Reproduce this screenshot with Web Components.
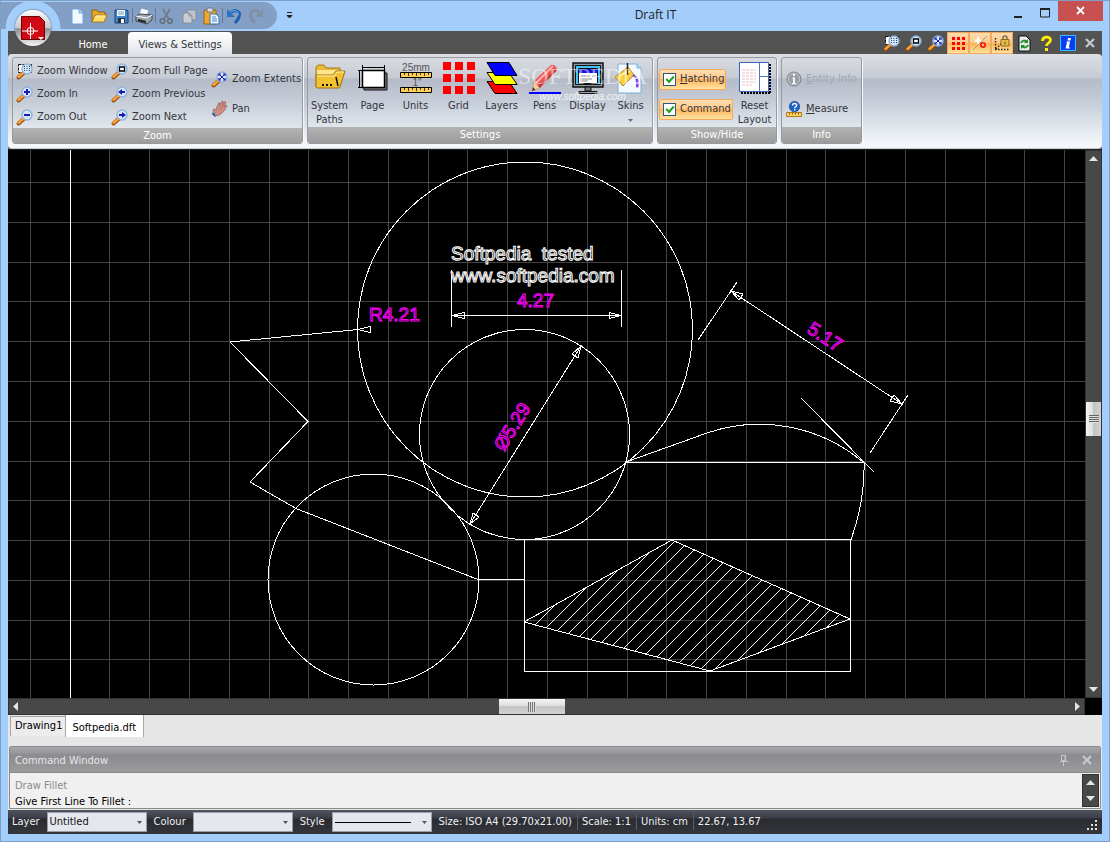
<!DOCTYPE html>
<html lang="en">
<head>
<meta charset="utf-8">
<title>Draft IT</title>
<style>
    html, body {
        margin: 0;
        height: 100%;
    }

    body {
        font: 11px/14px "DejaVu Sans Condensed", "Open Sans", sans-serif;
        color: #33353d;
    }
</style>
</head>
<body>
<draft-app></draft-app>

<script>
// registers a custom element whose shadow root is cloned from the given markup
function define(name, html, setup) {
   const template = document.createElement("template");
   template.innerHTML = html;

   customElements.define(name, class extends HTMLElement {
      constructor() {
         super();
         this.attachShadow({ mode: "open" });
         this.shadowRoot.appendChild(template.content.cloneNode(true));
      }

      connectedCallback() {
         if (setup) setup(this, this.shadowRoot);
      }
   });
}

const lens = (inner) => `
    <path d="M1.500 14.500 7 9.500" stroke="#8a4a10" stroke-width="4" stroke-linecap="round"/>
    <path d="M1.500 14 6.500 9.500" stroke="#ffa030" stroke-width="2.400" stroke-linecap="round"/>
    <circle cx="10" cy="6" r="5" fill="#d4e8fb" stroke="#8fb2dc" stroke-width="1.400"/>${inner}`;

const sheet = "M3 1h7l4 4v11H3z";

const icons = {
   zoomwindow: [16, `<path d="M1.500 1.500h13v8h-13z" fill="#fff" stroke="#111" stroke-dasharray="3 1"/>` + lens(`<path d="M7 3.500h6M7 5.500h6M7 7.500h6" stroke="#345" stroke-dasharray="1 1.500"/>`)],
   zoomin: [16, lens(`<path d="M7 6h6M10 3v6" stroke="#1a1ab0" stroke-width="2"/>`)],
   zoomout: [16, lens(`<path d="M7 6h6" stroke="#1a1ab0" stroke-width="2"/>`)],
   zoompage: [16, lens(`<path d="M7.500 4h5v4h-5z" fill="#fff" stroke="#000" stroke-width="1.300"/>`)],
   zoomprev: [16, lens(`<path d="M13 6H8" stroke="#1a1ab0" stroke-width="2"/><path d="M6 6l4-3v6z" fill="#1a1ab0"/>`)],
   zoomnext: [16, lens(`<path d="M7 6h5" stroke="#1a1ab0" stroke-width="2"/><path d="M14 6l-4-3v6z" fill="#1a1ab0"/>`)],
   zoomext: [16, lens(`<path d="M7.500 3.500l5 5M12.500 3.500l-5 5" stroke="#1a1ab0"/><path d="M7 5V3h2M11 3h2v2M13 7v2h-2M9 9H7V7" stroke="#1a1ab0" stroke-width="1.200" fill="none"/>`)],
   pan: [16, `<path d="M1 11l3 4-1 1-3-3z" fill="#274b8c"/><path d="M1 10l4 5 4-2 3-3 3-5-1-1-2 2 2-5-1.200-.500-2.500 4 1-4L10 0 7.500 4.500 8 2 6.800 2 4.500 6.500l-.500 3-1-1.500-1.500 0z" fill="#cf8f86" stroke="#9a5d58" stroke-width=".7"/><path d="M7 8l3-4M8 9l4-4" stroke="#b06f68" stroke-width=".7"/>`],
   newdoc: [18, `<path d="M4 2h7l4 4v11H4z" fill="#f2f9ff" stroke="#6ea3d8"/><path d="M11 2v4h4" fill="#bcdcf5" stroke="#6ea3d8"/>`],
   open: [18, `<path d="M2 15V3h5l1 2h7v3" fill="#e9a92b" stroke="#8d6514"/><path d="M2 15l3-7h12l-3 7z" fill="#ffdf6d" stroke="#a87818"/><path d="M6 9h9" stroke="#fff6c0"/>`],
   save: [18, `<path d="M3 3h12l1 1v12H3z" fill="#3d84c8" stroke="#1d3e6e"/><path d="M5 3h8v6H5z" fill="#eef5fb"/><path d="M6 5h6M6 7h6" stroke="#7aa"/><path d="M6 11h7v5H6z" fill="#222e3c"/><path d="M9 12h3v4H9z" fill="#fff"/>`],
   print: [18, `<path d="M6 1l8 2-2 6-8-1z" fill="#f6faff" stroke="#7b92ac" stroke-width=".8"/><path d="M1 9l4-2 12 1v5l-5 4-11-3z" fill="#9aa4b0" stroke="#3f4650"/><path d="M1 9l11 2 5-3" stroke="#fff" fill="none"/><path d="M3 13l8 2" stroke="#222" stroke-width="2"/><path d="M12 14l2-1" stroke="#50e050"/>`],
   cut: [18, `<path d="M5 2l6 10M12 2L6 12" stroke="#717a87" stroke-width="1.600"/><circle cx="4.500" cy="14" r="2.300" fill="none" stroke="#68717e" stroke-width="1.600"/><circle cx="12" cy="14" r="2.300" fill="none" stroke="#68717e" stroke-width="1.600"/>`],
   copy: [18, `<path d="M7 3h9v10H7z" fill="#bcc3cc" stroke="#848d99"/><path d="M3 6h6l3 3v7H3z" fill="#c8cdd4" stroke="#848d99"/><path d="M9 6v3h3" fill="none" stroke="#848d99"/>`],
   paste: [18, `<path d="M2 3h12v14H2z" fill="#f0a72b" stroke="#9a6717"/><path d="M5 1h6v4H5z" fill="#d9dee4" stroke="#6f7780"/><path d="M8 7h6l3 3v7H8z" fill="#eaf5ff" stroke="#3f70ad"/><path d="M10 10h4M10 12h5M10 14h5" stroke="#4f89c6"/>`],
   undo: [18, `<path d="M5 6c6-5 11-1 9 4-1 3-2 4-4 6" fill="none" stroke="#1c5fae" stroke-width="3"/><path d="M5 5.500c6-4 9-1 8 3" fill="none" stroke="#79b6f2"/><path d="M2 2v8h8z" fill="#2c72c0"/>`],
   redo: [18, `<path d="M13 6C7 1 2 5 4 10c1 3 2 4 4 6" fill="none" stroke="#8290a4" stroke-width="3"/><path d="M16 2v8H8z" fill="#8290a4"/>`],
   grid9: [16, `<path d="M2 3.500h13M2 8.500h13M2 13.500h13" stroke="#f00" stroke-width="3" stroke-dasharray="3 2"/>`],
   snap: [16, `<path d="M1 15L15 1" stroke="#9a8a70" stroke-width=".8"/><circle cx="11" cy="10" r="2.200" fill="none" stroke="#f01010" stroke-width="1.600"/><path d="M6 2v7M2.500 5.500h7" stroke="#fff" stroke-width="2"/>`],
   lock: [16, `<path d="M1.500 3v12M1 14.500h14M2 14L8 8" stroke="#222" stroke-width="1.400" stroke-dasharray="1.500 1.500"/><path d="M9 5V3q0-2 2-2t2 2v2" fill="none" stroke="#7a7052" stroke-width="1.500"/><path d="M7 4.500h8V11H7z" fill="#e7bf48" stroke="#8b6a20"/><path d="M10.500 6.500h1v3h-1z" fill="#604010"/>`],
   refresh: [16, `<path d="${sheet}" fill="#e8edf0" stroke="#111"/><path d="M5 8c1-3 4-3 6-1" fill="none" stroke="#209020" stroke-width="2"/><path d="M12 4v4H8z" fill="#209020"/><path d="M12 10c-1 3-4 3-6 1" fill="none" stroke="#209020" stroke-width="2"/><path d="M5 14v-4h4z" fill="#209020"/>`],
   help: [16, `<path d="M4.500 6c0-5 8-5 8-1 0 3-4 3-4 6" fill="none" stroke="#8a7a00" stroke-width="3.400"/><path d="M4.500 6c0-5 8-5 8-1 0 3-4 3-4 6" fill="none" stroke="#ffee10" stroke-width="2.600"/><path d="M7 13h3v3H7z" fill="#ffee10"/>`],
   about: [16, `<path d="M.500 .500h15v15H.500z" fill="#0a3cf0" stroke="#30c0ff"/><path d="M8 3h3l-.500 2.500h-3zM7 6.500h3L8.800 12.500H10v1H5.500L7 7.500H6z" fill="#fff"/>`],
   cross: [16, `<path d="M4 4l8 8M12 4l-8 8" stroke="#c3c9d3" stroke-width="2.200"/>`],
   paths: [32, `<path d="M2 25V5l2-2h6l2 3h14v6" fill="#e8b93a" stroke="#a87915"/><path d="M3 8h22v8H3z" fill="#ffe58c"/><path d="M2 25V13h17l3-4h9l-5 16q0 1-2 1H3z" fill="#f2c230" stroke="#a07010"/><path d="M3 14h17l3-4h7" fill="none" stroke="#fff3b0"/><path d="M8 22h2v2H8zM12 22h2v2h-2zM16 22h2v2h-2z" fill="#111"/><path d="M22 15l2 9" stroke="#111" stroke-width="1.500"/>`],
   page: [32, `<path d="M7 11h23v17H7z" fill="#777" stroke="#111"/><path d="M5.500 8.500h22v17h-22z" fill="#fff" stroke="#000" stroke-width="1.500"/><path d="M5 5.500h23M5.500 3v5M27.500 3v5M2.500 8v18M1 8.500h4M1 25.500h4" stroke="#000"/>`],
   units: [32, `<path d="M.500 10.500h31v5H.500zM.500 25.500h31v5H.500z" fill="#ffce54" stroke="#000"/><path d="M4.500 11v2M8.500 11v3M12.500 11v2M16.500 11v3M20.500 11v2M24.500 11v3M28.500 11v2M4.500 26v2M8.500 26v3M12.500 26v2M16.500 26v3M20.500 26v2M24.500 26v3M28.500 26v2" stroke="#333"/><text x="16" y="9" text-anchor="middle" font-family="Liberation Sans" font-size="10" fill="#555">25mm</text><text x="17" y="24" text-anchor="middle" font-family="Liberation Sans" font-size="10" fill="#555">1"</text>`],
   grid: [32, `<path d="M0 4h32M0 16h32M0 28h32" stroke="#f00" stroke-width="8" stroke-dasharray="8 4"/>`],
   layers: [32, `<path d="M1 19.500h22l8 12H9z" fill="#f00" stroke="#000"/><path d="M1 10.500h22l8 12H9z" fill="#ff0" stroke="#000"/><path d="M1 .500h22l8 13H9z" fill="#00f" stroke="#000"/>`],
   pens: [32, `<path d="M0 31h32" stroke="#00f" stroke-width="2"/><path d="M3 29l2-10 6 7z" fill="#f0cfa8" stroke="#b08a70" stroke-width=".6"/><path d="M3 29l1-4 2.500 3z" fill="#732828"/><path d="M5 19L22 3q4-1 6 4L11 26z" fill="#ef5350"/><path d="M7 21L24 4" stroke="#ffb0ac" stroke-width="2"/><path d="M10 25L27 8" stroke="#c03030" stroke-width="2"/>`],
   display: [32, `<path d="M1 1h30v24H1z" fill="#8b9aa6" stroke="#111" stroke-width="1.500"/><path d="M3.500 3.500h25v19h-25z" fill="#45c2f5" stroke="#111"/><path d="M6.500 6.500h19v15h-19z" fill="#fff" stroke="#111"/><path d="M7 7h19v4H7z" fill="#1414d8"/><path d="M8 14h10M8 17h12M8 19h8M20 14h4" stroke="#888"/><path d="M13 25h6v4h-6z" fill="#777" stroke="#111"/><path d="M7 29.500h18v2H7z" fill="#9aa" stroke="#111"/>`],
   skins: [32, `<path d="M3 2h19l4 4v25H3z" fill="#f4faff" stroke="#7db0e0"/><path d="M22 2v4h4" fill="#c0ddf6" stroke="#7db0e0"/><path d="M0 15L13 5l6 8-11 11z" fill="#f7cf3c" stroke="#b58a18"/><path d="M3 15L13 7l3 3z" fill="#fff0a0"/><path d="M12.500 1v12" stroke="#222" stroke-width="1.500"/><path d="M18 13c4 2 5 6 4 13" fill="none" stroke="#8a3ee0" stroke-width="2.500" stroke-dasharray="4 1"/>`],
   layout: [32, `<path d="M.500 .500h29v29H.500z" fill="#fff" stroke="#3c64b8"/><path d="M20.500 1v29M21 14.500h9" stroke="#4a78c8"/><path d="M3 8h14M3 11h14M3 14h14M3 17h14M3 20h14M3 23h10" stroke="#f0bcc8" stroke-dasharray="3 1"/><path d="M31 2v29M2 31h29" stroke="#000" stroke-width="2" stroke-dasharray="2 1"/>`],
   info: [16, `<circle cx="8" cy="8" r="7" fill="#9b9ea2" stroke="#82868b"/><circle cx="8" cy="8" r="5.800" fill="none" stroke="#c6c9cd"/><path d="M7 3h2v2H7zM6 6.500h3V12h1v1H6v-1h1V7.500H6z" fill="#f3f4f5"/>`],
   measure: [16, `<circle cx="8.500" cy="5.500" r="5.200" fill="#1c62c4" stroke="#143f8c" stroke-width=".6"/><path d="M6.500 4.500c0-2.600 4.200-2.600 4.200-.300 0 1.600-2 1.400-2 3" fill="none" stroke="#fff" stroke-width="1.400"/><path d="M8 8h1.500v1.500H8z" fill="#fff"/><path d="M.500 11.500h15v4H.500z" fill="#ffd45e" stroke="#b07a1c"/><path d="M3.500 12v1.500M6.500 12v1.500M9.500 12v1.500M12.500 12v1.500" stroke="#805010"/>`],
   pin: [16, `<path d="M5.500 3.500h4v5h-4zM9 3v6M4 9.500h8M7.500 10v4" fill="none" stroke="#c3c8ce"/>`]
};

define("app-icon", `
    <style>
        :host { display: block; flex: none; }
        svg { display: block; overflow: visible; }
    </style>
    <svg fill="none" aria-hidden="true"></svg>
`, (el, root) => {
   const [size, body] = icons[el.getAttribute("name")];
   const svg = root.querySelector("svg");
   svg.setAttribute("width", size);
   svg.setAttribute("height", size);
   svg.innerHTML = body;
});

define("title-bar", `
    <style>
        :host {
            display: flex;
            height: 30px;
            position: relative;
            color: #1d1d1d;
        }
        .logo {
            position: absolute;
            left: 14px;
            top: 9px;
            z-index: 2;
            width: 36px;
            height: 36px;
            padding: 0;
            border: 0;
            border-radius: 50%;
            background: linear-gradient(#fdfdfd, #c9c9c9 50%, #8f8f8f 52%, #f4f4f4);
            box-shadow: 0 0 2px #444;
        }
        .logo svg { display: block; }
        .quick {
            display: flex;
            align-items: center;
            margin-top: 1px;
            height: 27px;
            width: 211px;
            padding-left: 65px;
            border-radius: 0 14px 14px 0;
            background: radial-gradient(circle 28px at 32px 26px, transparent 27px, #7c98bd 28px, #839fc5 29px);
        }
        .quick button {
            width: 22px;
            height: 22px;
            padding: 0 2px;
            border: 0;
            background: none;
        }
        i {
            width: 1px;
            height: 15px;
            background: #627ca0;
        }
        .more {
            width: 24px;
            border: 0;
            padding: 0;
            background: none;
        }
        h1 {
            flex: 1;
            margin: 0;
            padding-left: 6px;
            font: 12px/28px "Open Sans", sans-serif;
            text-align: center;
        }
        .win { display: flex; align-items: flex-start; margin-right: 6px; }
        .win button {
            width: 27px;
            height: 20px;
            padding: 0;
            border: 0;
            background: none;
        }
        .win .close { width: 45px; background: #c75050; }
        .win svg { display: block; margin: auto; }
    </style>
    <button class="logo" aria-label="Application menu">
        <svg width="36" height="36"><path d="M6.500 6.500h18l5 5v18h-23z" fill="#cf0a14" stroke="#6d0206"/><path d="M7 21h16M15.500 13v16" stroke="#fff"/><circle cx="15.500" cy="21" r="3.500" fill="none" stroke="#fff"/><path d="M23 27h6l-3 3z" fill="#fff"/></svg>
    </button>
    <div class="quick">
        <button aria-label="New"><app-icon name="newdoc"></app-icon></button>
        <button aria-label="Open"><app-icon name="open"></app-icon></button>
        <button aria-label="Save"><app-icon name="save"></app-icon></button><i></i>
        <button aria-label="Print"><app-icon name="print"></app-icon></button><i></i>
        <button aria-label="Cut"><app-icon name="cut"></app-icon></button>
        <button aria-label="Copy"><app-icon name="copy"></app-icon></button>
        <button aria-label="Paste"><app-icon name="paste"></app-icon></button><i></i>
        <button aria-label="Undo"><app-icon name="undo"></app-icon></button>
        <button aria-label="Redo"><app-icon name="redo"></app-icon></button>
    </div>
    <button class="more" aria-label="Customise toolbar"><svg width="7" height="9"><path d="M1 .500h5M1 3.500h5L3.500 6z" stroke="#222" fill="#222"/></svg></button>
    <h1>Draft IT</h1>
    <div class="win">
        <button aria-label="Minimize"><svg width="10" height="16"><path d="M1 14h8" stroke="#222" stroke-width="2"/></svg></button>
        <button aria-label="Maximize"><svg width="12" height="18"><path d="M1.500 7h9v8h-9z" fill="none" stroke="#222"/><path d="M1 7h10" stroke="#222" stroke-width="2"/></svg></button>
        <button class="close" aria-label="Close"><svg width="10" height="10"><path d="M1 1l7 7M8 1L1 8" stroke="#fff" stroke-width="1.800"/></svg></button>
    </div>
`);

define("tab-row", `
    <style>
        :host {
            display: flex;
            align-items: flex-end;
            height: 23px;
            background: #535353;
        }
        button {
            font: inherit;
            border: 0;
            padding: 0;
            height: 22px;
            background: none;
            color: #fff;
        }
        .home { margin-left: 50px; width: 70px; padding-top: 3px; }
        .on {
            width: 104px;
            padding-top: 3px;
            color: #33353d;
            border-radius: 4px 4px 0 0;
            background: linear-gradient(#fff, #eef0f3 60%, #dfe2e8);
        }
        .tools { display: flex; margin-left: auto; padding-right: 1px; }
        .tools button { width: 22px; padding: 0 3px; }
        .tools .lit {
            padding: 0 2px;
            border: 1px solid #f0a860;
            background: linear-gradient(#ffdcae, #ffc988 50%, #ffb456 52%, #ffe39c);
        }
    </style>
    <button class="home">Home</button>
    <button class="on">Views &amp; Settings</button>
    <div class="tools">
        <button aria-label="Zoom window"><app-icon name="zoomwindow"></app-icon></button>
        <button aria-label="Zoom full page"><app-icon name="zoompage"></app-icon></button>
        <button aria-label="Zoom extents"><app-icon name="zoomext"></app-icon></button>
        <button class="lit" aria-label="Grid"><app-icon name="grid9"></app-icon></button>
        <button class="lit" aria-label="Snap"><app-icon name="snap"></app-icon></button>
        <button class="lit" aria-label="Lock"><app-icon name="lock"></app-icon></button>
        <button aria-label="Refresh"><app-icon name="refresh"></app-icon></button>
        <button aria-label="Help"><app-icon name="help"></app-icon></button>
        <button aria-label="About"><app-icon name="about"></app-icon></button>
        <button aria-label="Close drawing"><app-icon name="cross"></app-icon></button>
    </div>
`);

define("ribbon-group", `
    <style>
        :host {
            display: flex;
            flex-direction: column;
            box-sizing: border-box;
            border: 1px solid #96999f;
            border-radius: 3px;
            overflow: hidden;
            box-shadow: 1px 1px 0 #f6f7f9;
        }
        .content { flex: 1; display: flex; align-items: flex-start; }
        .name {
            height: 16px;
            line-height: 16px;
            text-align: center;
            color: #fff;
            background: linear-gradient(#b3b3b3, #9b9b9b);
        }
    </style>
    <div class="content"><slot></slot></div>
    <div class="name"></div>
`, (el, root) => {
   root.querySelector(".name").textContent = el.getAttribute("name");
});

// puts the icon named on the host in front of the button's label
function addIcon(el, root) {
   const icon = document.createElement("app-icon");
   icon.setAttribute("name", el.getAttribute("icon"));
   root.querySelector("button").prepend(icon);
}

define("small-button", `
    <style>
        :host { display: flex; align-items: center; }
        button {
            display: flex;
            align-items: center;
            gap: 4px;
            padding: 0;
            border: 0;
            background: none;
            font: inherit;
            color: inherit;
            white-space: nowrap;
        }
        button:disabled { color: #a2a6ad; }
    </style>
    <button><span><slot></slot></span></button>
`, (el, root) => {
   addIcon(el, root);
   root.querySelector("button").disabled = el.hasAttribute("disabled");
});

define("big-button", `
    <style>
        :host { display: block; width: 43px; }
        button {
            display: flex;
            flex-direction: column;
            align-items: center;
            gap: 5px;
            width: 100%;
            padding: 4px 0 0;
            border: 0;
            background: none;
            font: inherit;
            color: inherit;
        }
        svg { display: none; }
        :host([menu]) svg { display: block; margin: 6px auto 0; }
    </style>
    <button><span><slot></slot><svg width="5" height="3"><path d="M0 0h5L2.500 3z" fill="#666b75"/></svg></span></button>
`, addIcon);

define("toggle-check", `
    <style>
        :host { display: flex; align-items: center; height: 30px; }
        label {
            display: flex;
            align-items: center;
            gap: 4px;
            height: 19px;
            padding: 0 1px 0 3px;
            border: 1px solid #f3aa5a;
            border-radius: 2px;
            background: linear-gradient(#ffddb0, #ffcb8d 45%, #ffb55c 50%, #ffe2a0);
        }
        input {
            appearance: none;
            box-sizing: border-box;
            width: 13px;
            height: 13px;
            margin: 0;
            border: 1px solid #2b5a80;
            background: #fff;
            display: grid;
            place-items: center;
        }
        input:checked::before {
            content: "";
            width: 6px;
            height: 3px;
            margin-bottom: 2px;
            border: solid #1fa01f;
            border-width: 0 0 2px 2px;
            transform: rotate(-48deg);
        }
    </style>
    <label><input type="checkbox" checked><span><slot></slot></span></label>
`);

define("app-ribbon", `
    <style>
        :host {
            display: flex;
            gap: 4px;
            position: relative;
            box-sizing: border-box;
            height: 95px;
            padding: 3px 4px 4px;
            border-radius: 4px;
            border-bottom: 1px solid #c4c7cb;
            background: linear-gradient(#dcdfe4, #c6cad3 24px, #b4bac7 25px, #c8cfd9 50px, #f3f7fb 90px);
        }
        .zoom { width: 291px; }
        .cols {
            display: grid;
            grid-template-columns: 95px 100px auto;
            padding: 1px 0 0 4px;
        }
        small-button { height: 23px; }
        .tall small-button { height: 30px; }
        .tall { padding-top: 5px; }
        .settings { width: 346px; }
        .show { width: 120px; }
        .checks { width: 74px; padding: 6px 0 0 1px; }
        .info { width: 81px; }
        .info .tall { padding: 6px 0 0 4px; }
        .mark {
            position: absolute;
            left: 510px;
            top: 8px;
            font: 24px/28px "Liberation Serif", serif;
            color: rgba(255, 255, 255, .5);
            pointer-events: none;
        }
        .mark small {
            display: block;
            margin-top: 2px;
            font: italic 10px/10px "Liberation Sans", sans-serif;
            text-align: center;
            color: rgba(255, 255, 255, .8);
        }
    </style>
    <ribbon-group class="zoom" name="Zoom">
        <div class="cols">
            <div>
                <small-button icon="zoomwindow">Zoom Window</small-button>
                <small-button icon="zoomin">Zoom In</small-button>
                <small-button icon="zoomout">Zoom Out</small-button>
            </div>
            <div>
                <small-button icon="zoompage">Zoom Full Page</small-button>
                <small-button icon="zoomprev">Zoom Previous</small-button>
                <small-button icon="zoomnext">Zoom Next</small-button>
            </div>
            <div class="tall">
                <small-button icon="zoomext">Zoom Extents</small-button>
                <small-button icon="pan">Pan</small-button>
            </div>
        </div>
    </ribbon-group>
    <ribbon-group class="settings" name="Settings">
        <big-button icon="paths">System Paths</big-button>
        <big-button icon="page">Page</big-button>
        <big-button icon="units">Units</big-button>
        <big-button icon="grid">Grid</big-button>
        <big-button icon="layers">Layers</big-button>
        <big-button icon="pens">Pens</big-button>
        <big-button icon="display">Display</big-button>
        <big-button icon="skins" menu>Skins</big-button>
    </ribbon-group>
    <ribbon-group class="show" name="Show/Hide">
        <div class="checks">
            <toggle-check><u>H</u>atching</toggle-check>
            <toggle-check>Command</toggle-check>
        </div>
        <big-button icon="layout">Reset Layout</big-button>
    </ribbon-group>
    <ribbon-group class="info" name="Info">
        <div class="tall">
            <small-button icon="info" disabled><u>E</u>ntity Info</small-button>
            <small-button icon="measure"><u>M</u>easure</small-button>
        </div>
    </ribbon-group>
    <div class="mark">SOFTPEDIA<small>www.softpedia.com</small></div>
`);

define("scroll-bar", `
    <style>
        :host {
            display: flex;
            align-items: center;
            box-sizing: border-box;
            background: #484848;
            border: 1px solid #2f3236;
        }
        :host([vertical]) { flex-direction: column; }
        svg { flex: none; margin: 3px; }
        .before { flex: var(--before, 1) 0 0; }
        .after { flex: var(--after, 1) 0 0; }
        .thumb {
            display: grid;
            place-items: center;
            width: 66px;
            height: 100%;
            background: linear-gradient(#f4f4f4, #dedede 45%, #c3c4c6 50%, #d2d2d4);
        }
        .thumb::before {
            content: "";
            width: 8px;
            height: 10px;
            background: repeating-linear-gradient(90deg, #777 0 1px, #ddd 1px 2px);
        }
        :host([vertical]) .thumb {
            width: 100%;
            height: 34px;
            background: linear-gradient(90deg, #f4f4f4, #dedede 45%, #c3c4c6 50%, #d2d2d4);
        }
        :host([vertical]) .thumb::before {
            width: 10px;
            height: 8px;
            background: repeating-linear-gradient(#666 0 1px, #ddd 1px 2px);
        }
        :host([bare]) .thumb { display: none; }
    </style>
    <svg class="first" width="9" height="9"></svg>
    <div class="before"></div>
    <div class="thumb"></div>
    <div class="after"></div>
    <svg class="last" width="9" height="9"></svg>
`, (el, root) => {
   const vertical = el.hasAttribute("vertical");
   root.querySelector(".first").innerHTML = `<path fill="#e4e4e4" d="${vertical ? "M0 7h9L4.500 2z" : "M6 0v9L1 4.500z"}"/>`;
   root.querySelector(".last").innerHTML = `<path fill="#e4e4e4" d="${vertical ? "M0 2h9L4.500 7z" : "M3 0v9l5-4.500z"}"/>`;
});

// page grid: one square every 39.78px
function gridPath() {
   let d = "";
   for (let n = -1; n < 50; n++) d += `M${Math.floor(70.15 + 39.78 * n) + 0.5} 150V1400`;
   for (let n = 0; n < 30; n++) d += `M8 ${Math.floor(182.6 + 39.78 * n) + 0.5}H2000`;
   return d;
}

function hatchPath() {
   let d = "";
   for (let n = 0; n < 22; n++) {
      const c = 1160 + 14 * n;
      d += `M${c - 680} 680L${c - 530} 530`;
   }
   return d;
}

define("drawing-canvas", `
    <style>
        :host {
            display: block;
            overflow: hidden;
            background: #000;
            contain: size;
        }
        svg { display: block; width: 100%; height: 100%; }
        .lines { fill: none; stroke: #fff; shape-rendering: crispEdges; }
        .grid { stroke: #434343; }
        text {
            font: 19px "Liberation Sans", sans-serif;
            fill: #000;
            stroke: #fff;
            stroke-width: 1px;
            text-rendering: geometricPrecision;
            white-space: pre;
        }
        .dim { stroke: #f0f; }
    </style>
    <svg>
        <g transform="translate(-8 -150)">
            <clipPath id="diamond"><path d="M524 622L672 540 850 619 710 671z"/></clipPath>
            <g class="lines">
                <path class="grid" d="${gridPath()}"/>
                <path d="M70.500 150V1400"/>
                <circle cx="525" cy="329.500" r="167.500"/>
                <circle cx="524.500" cy="434.500" r="105"/>
                <circle cx="373.500" cy="579.500" r="105.500"/>
                <path d="M358 329.500L230 342 308 421.500 250 482 296 508.500 478 579.500H524"/>
                <path d="M358 329.500l12-3v6z"/>
                <path d="M451.500 270V327M621.500 270V327M451 315.500H621M452 315.500l12-3v6zM621 315.500l-12-3v6z"/>
                <path d="M698 340L737 282M870 453L908 395M731 291L902 404"/>
                <path d="M731 291l12 3-4 6zM902 404l-12-3 4-6z"/>
                <path d="M581 346L470 524M581 346l-9 8 6 4zM470 524l3-11 6 4z"/>
                <path d="M801 398L874 472M626 462L707 433A161 161 0 0 1 863 462M626 462.500H864Q865 500 851 540"/>
                <path d="M524.500 539.500H850.500V671.500H524.500z"/>
                <path d="M524 622L672 540 850 619 710 671z"/>
                <path clip-path="url(#diamond)" d="${hatchPath()}"/>
            </g>
            <text x="451" y="260">Softpedia  tested</text>
            <text x="451" y="282">www.softpedia.com</text>
            <text class="dim" x="517" y="307">4.27</text>
            <text class="dim" x="369" y="321">R4.21</text>
            <text class="dim" transform="translate(806 332) rotate(33)">5.17</text>
            <text class="dim" transform="translate(504 452) rotate(-58)">Ø5.29</text>
        </g>
    </svg>
`);

define("document-view", `
    <style>
        :host {
            display: grid;
            grid-template-columns: 1fr 17px;
            grid-template-rows: 1fr 17px;
            border-top: 1px solid #222;
            box-sizing: border-box;
            background: #000;
            min-height: 0;
        }
        .v { --before: 235; --after: 245; }
        .h { --before: 468; --after: 496; }
    </style>
    <drawing-canvas></drawing-canvas>
    <scroll-bar class="v" vertical></scroll-bar>
    <scroll-bar class="h"></scroll-bar>
`);

define("document-tabs", `
    <style>
        :host {
            display: flex;
            align-items: flex-start;
            height: 31px;
            padding-left: 2px;
            background: #e6e6e6;
            color: #000;
        }
        button {
            font: inherit;
            color: inherit;
            box-sizing: border-box;
            height: 20px;
            margin-top: 1px;
            padding: 0 3px 2px 4px;
            border: 1px solid #a5a5a5;
            border-width: 1px 0 0 1px;
            background: #ececec;
        }
        .on {
            height: 22px;
            margin-top: 0;
            padding: 3px 7px 0 6px;
            border-width: 0 1px 0 1px;
            background: #fff;
        }
    </style>
    <button>Drawing1</button>
    <button class="on">Softpedia.dft</button>
`);

define("command-window", `
    <style>
        :host {
            display: block;
            margin: 0 1px;
            border: 1px solid #8b8b8b;
            border-radius: 2px 2px 0 0;
        }
        header {
            display: flex;
            align-items: center;
            height: 25px;
            padding: 0 5px;
            color: #e6e6e8;
            border-bottom: 1px solid #88888a;
            background: linear-gradient(#a6a6ab, #97979c 6px, #8b8c8e 8px, #9b9b9e);
        }
        h2 { flex: 1; margin: 0; padding-top: 2px; font: inherit; }
        header button {
            width: 23px;
            padding: 0 0 0 7px;
            border: 0;
            background: none;
        }
        .body { display: flex; height: 35px; background: #f0f0f0; }
        .log { flex: 1; padding: 5px 5px 0; line-height: 16px; }
        p { margin: 0; color: #8b8b8b; }
        .line { display: flex; gap: 4px; color: #000; }
        input {
            flex: 1;
            height: 14px;
            padding: 0;
            border: 0;
            outline: 0;
            background: none;
            font: inherit;
        }
        scroll-bar { width: 17px; margin: 1px 1px 1px 0; }
    </style>
    <header>
        <h2>Command Window</h2>
        <button aria-label="Pin"><app-icon name="pin"></app-icon></button>
        <button aria-label="Close"><app-icon name="cross"></app-icon></button>
    </header>
    <div class="body">
        <div class="log">
            <p>Draw Fillet</p>
            <div class="line"><label for="cmd">Give First Line To Fillet :</label><input id="cmd"></div>
        </div>
        <scroll-bar vertical bare></scroll-bar>
    </div>
`);

define("status-select", `
    <style>
        :host { display: flex; align-items: center; gap: 7px; }
        .box { display: grid; width: 100px; }
        .box > * { grid-area: 1 / 1; }
        select {
            appearance: none;
            height: 20px;
            padding: 0 2px;
            border: 1px solid #9a9da3;
            border-radius: 0;
            background: #e4e7ee;
            font: inherit;
            color: #111;
        }
        svg {
            justify-self: end;
            align-self: center;
            margin-right: 5px;
            pointer-events: none;
        }
        .sample { display: none; }
        :host([line]) .sample {
            display: block;
            justify-self: start;
            margin: 0 0 0 3px;
        }
    </style>
    <label for="pick"></label>
    <div class="box">
        <select id="pick"><option></option></select>
        <svg class="sample" width="76" height="1"><path d="M0 .500h76" stroke="#000"/></svg>
        <svg width="5" height="3"><path d="M0 0h5L2.500 3z" fill="#555"/></svg>
    </div>
`, (el, root) => {
   root.querySelector("label").textContent = el.getAttribute("label");
   root.querySelector("option").textContent = el.getAttribute("value") || "";
});

define("status-bar", `
    <style>
        :host {
            display: flex;
            align-items: center;
            gap: 7px;
            height: 24px;
            margin-top: 1px;
            padding: 0 4px;
            line-height: 16px;
            color: #f1f1f1;
            background: linear-gradient(#50545f, #3a3d47 8px, #292b30 9px, #35373d);
        }
        span { border-right: 1px solid #5a5c62; padding-right: 5px; margin-right: -3px; }
        span.last { border: 0; }
        .grip { margin: 6px 0 0 auto; }
    </style>
    <status-select label="Layer" value="Untitled"></status-select>
    <status-select label="Colour"></status-select>
    <status-select label="Style" line></status-select>
    <span>Size: ISO A4 (29.70x21.00)</span>
    <span>Scale: 1:1</span>
    <span>Units: cm</span>
    <span class="last">22.67, 13.67</span>
    <svg class="grip" width="11" height="11"><path d="M8 1h2M4 5h2M8 5h2M0 9h2M4 9h2M8 9h2" stroke="#e4e4e4" stroke-width="2"/></svg>
`);

define("draft-app", `
    <style>
        :host {
            display: flex;
            flex-direction: column;
            box-sizing: border-box;
            height: 100vh;
            border: 1px solid #7d9fc6;
            background: #a3cdfb;
        }
        main {
            flex: 1;
            display: flex;
            flex-direction: column;
            min-height: 0;
            margin: 0 7px 7px;
            background: #e6e6e6;
        }
        .top { background: #535353; }
        document-view { flex: 1; }
    </style>
    <title-bar></title-bar>
    <main>
        <div class="top">
            <tab-row></tab-row>
            <app-ribbon></app-ribbon>
        </div>
        <document-view></document-view>
        <document-tabs></document-tabs>
        <command-window></command-window>
        <status-bar></status-bar>
    </main>
`);
</script>
</body>
</html>
